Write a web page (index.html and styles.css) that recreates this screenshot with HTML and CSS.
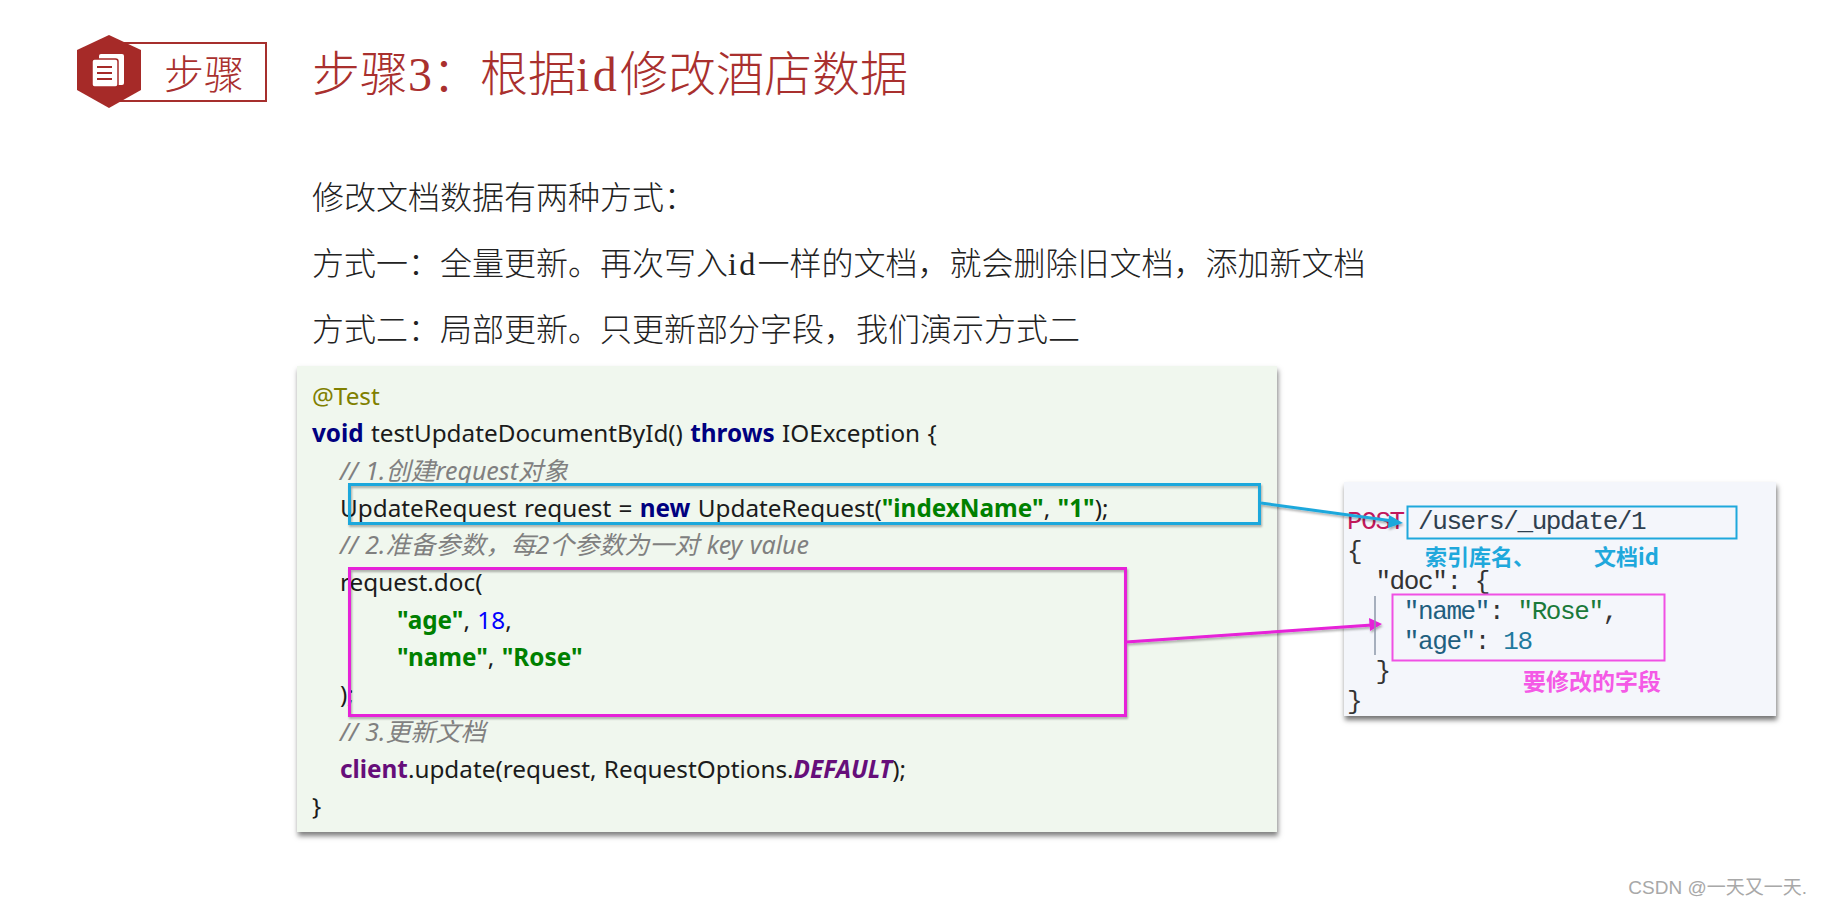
FILE: index.html
```html
<!DOCTYPE html>
<html lang="zh-CN">
<head>
<meta charset="utf-8">
<title>步骤3</title>
<link rel="stylesheet" href="styles.css">
</head>
<body>
<main class="slide">
  <header class="head">
    <div class="badge">
      <svg class="hex" viewBox="0 0 64 73" width="64" height="73" aria-hidden="true">
        <path d="M32 0 64 15V55L32 73 0 55V15Z" fill="#a62a28"/>
        <rect x="22" y="19" width="25" height="31" rx="2" fill="#fff"/>
        <rect x="15" y="24" width="26" height="28" rx="2.5" fill="#fff" stroke="#a62a28" stroke-width="1.5"/>
        <path d="M20 32H35M20 38H35M20 44H35" stroke="#a62a28" stroke-width="2"/>
      </svg>
      <span class="badge-text">步骤</span>
    </div>
    <h1 class="title">步骤<span class="digit">3</span>：根据<span class="half">id</span>修改酒店数据</h1>
  </header>
  <section class="body">
    <p>修改文档数据有两种方式：</p>
    <p>方式一：全量更新。再次写入<span class="half">id</span>一样的文档，就会删除旧文档，添加新文档</p>
    <p>方式二：局部更新。只更新部分字段，我们演示方式二</p>
  </section>
  <section class="work">
    <div class="code">
      <div class="ln"><span class="ann">@Test</span></div>
      <div class="ln"><b class="kw">void</b> testUpdateDocumentById() <b class="kw">throws</b> IOException {</div>
      <div class="ln in1"><i class="com">// 1.创建request对象</i></div>
      <div class="ln in1">UpdateRequest request = <b class="kw">new</b> UpdateRequest(<b class="str">"indexName"</b>, <b class="str">"1"</b>);</div>
      <div class="ln in1"><i class="com">// 2.准备参数，每2个参数为一对 key value</i></div>
      <div class="ln in1">request.doc(</div>
      <div class="ln in2"><b class="str">"age"</b>, <span class="num">18</span>,</div>
      <div class="ln in2"><b class="str">"name"</b>, <b class="str">"Rose"</b></div>
      <div class="ln in1">);</div>
      <div class="ln in1"><i class="com">// 3.更新文档</i></div>
      <div class="ln in1"><b class="fld">client</b>.update(request, RequestOptions.<b class="const">DEFAULT</b>);</div>
      <div class="ln">}</div>
    </div>
    <pre class="req"><span class="post">POST</span> <span class="url">/users/_update/1</span>
{
  "doc": {
    <span class="key">"name"</span>: <span class="val">"Rose"</span>,
    <span class="key">"age"</span>: <span class="n2">18</span>
  }
}</pre>
  </section>

  <svg class="callouts" width="1822" height="906" viewBox="0 0 1822 906" aria-hidden="true">
    <defs>
      <filter id="sh" x="-5%" y="-20%" width="110%" height="140%"><feDropShadow dx="1" dy="2" stdDeviation="1.2" flood-color="#000" flood-opacity=".3"/></filter>
    </defs>
    <g fill="none" filter="url(#sh)">
      <rect x="349.5" y="484.5" width="910" height="39" stroke="#1fa8dc" stroke-width="3"/>
      <path d="M1261 503 1393 521" stroke="#1fa8dc" stroke-width="3"/>
      <path d="M1403 523 1389 515 1388 528Z" fill="#1fa8dc"/>
      <rect x="349.5" y="568.5" width="776" height="147" stroke="#e620d8" stroke-width="3"/>
      <path d="M1126 642 1372 625" stroke="#e620d8" stroke-width="3"/>
      <path d="M1382 624 1369 618 1370 631Z" fill="#e620d8"/>
    </g>
    <rect x="1407.5" y="506.5" width="329" height="32" fill="none" stroke="#1fa8dc" stroke-width="2"/>
    <rect x="1392.5" y="594.5" width="272" height="66" fill="none" stroke="#f050e4" stroke-width="2"/>
    <path d="M1375 596V655" stroke="#8d97a8" stroke-width="1.5"/>
  </svg>
  <span class="tag tag-index">索引库名、</span>
  <span class="tag tag-id">文档id</span>
  <span class="tag tag-field">要修改的字段</span>
  <span class="mark">CSDN @一天又一天.</span>
</main>
</body>
</html>
```

FILE: styles.css
```css
* { box-sizing: border-box; }
html, body { margin: 0; padding: 0; background: #fff; }
.slide {
  position: relative;
  width: 1822px;
  height: 906px;
  overflow: hidden;
  font-family: "Noto Sans CJK SC", sans-serif;
}
.head {
  display: flex;
  align-items: center;
  gap: 45px;
  padding: 36px 0 0 109px;
  height: 108px;
}
.badge {
  position: relative;
  display: flex;
  align-items: center;
  width: 158px;
  height: 60px;
  padding-left: 55px;
  border: 2px solid #a62f2d;
  border-left: 0;
}
.hex { position: absolute; left: -32px; top: -9px; }
.badge-text {
  font-size: 40px;
  line-height: 1;
  font-weight: 300;
  color: #a9302e;
}
.title {
  margin: 0;
  font-size: 48px;
  line-height: 1;
  font-weight: 300;
  color: #a9302e;
}
.digit { font-family: "Liberation Serif", serif; }
.half {
  font-family: "Liberation Serif", serif;
  letter-spacing: 0.07em;
}
.body {
  margin: 54px 0 0 312px;
  font-size: 32px;
  font-weight: 300;
  color: #222;
}
.body p {
  margin: 0;
  height: 66px;
  line-height: 66px;
}
.work {
  display: flex;
  align-items: flex-start;
  gap: 67px;
  margin: 6px 0 0 297px;
}
.code {
  width: 980px;
  height: 466px;
  padding: 11px 0 0 15px;
  background: #f0f7ee;
  box-shadow: 1px 4px 5px rgba(0, 0, 0, .5);
  font-family: "Noto Sans", "Noto Sans CJK SC", sans-serif;
  font-size: 24.3px;
  word-spacing: 1px;
  color: #1b1b1b;
}
.ln { height: 37.3px; line-height: 37.3px; white-space: nowrap; }
.in1 { padding-left: 28px; }
.in2 { padding-left: 85px; }
.ann { color: #808000; }
.kw { color: #000080; }
.str { color: #008000; }
.num { color: #0000ff; }
.com { color: #808080; font-size: 25px; }
.fld { color: #660e7a; }
.const { color: #660e7a; font-style: italic; }
.req {
  width: 432px;
  height: 234px;
  margin: 116px 0 0;
  padding: 25px 0 0 3px;
  background: #f4f6fb;
  box-shadow: 1px 4px 5px rgba(0, 0, 0, .55);
  font-family: "Liberation Mono", monospace;
  font-size: 26px;
  letter-spacing: -1.4px;
  line-height: 30px;
  color: #333;
}
.post { color: #c2185b; }
.url { color: #2f3f4f; }
.key { color: #1f5f7f; }
.val { color: #1a7a3a; }
.n2 { color: #1f7a9f; }
.callouts { position: absolute; left: 0; top: 0; pointer-events: none; }
.tag {
  position: absolute;
  font-size: 22px;
  line-height: 1;
  font-weight: 700;
  white-space: nowrap;
}
.tag-index { left: 1425px; top: 544px; color: #1fa8dc; }
.tag-id { left: 1594px; top: 544px; color: #1fa8dc; }
.tag-field { left: 1523px; top: 669px; font-size: 23px; color: #f45ae6; }
.mark {
  position: absolute;
  right: 15px;
  bottom: 9px;
  font-family: "Liberation Sans", "Noto Sans CJK SC", sans-serif;
  font-size: 19px;
  line-height: 1;
  color: #a8a8a8;
  white-space: nowrap;
}
```
